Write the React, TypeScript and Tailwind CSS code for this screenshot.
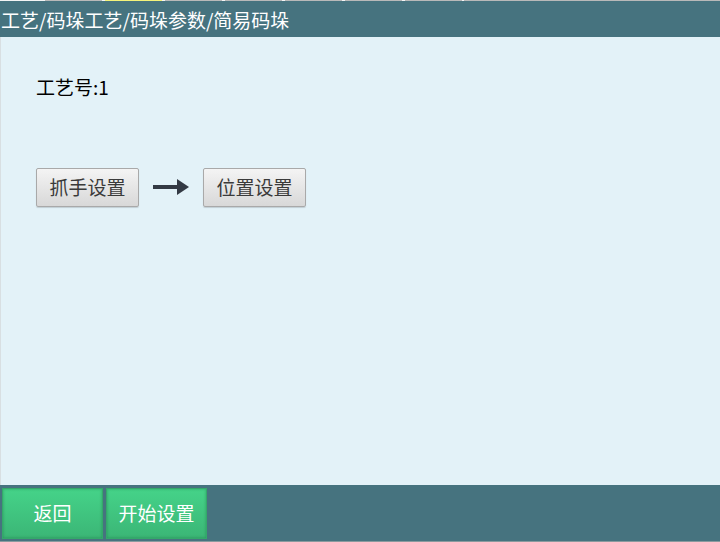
import React from "react";

const font = { fontFamily: '"Microsoft YaHei", "Noto Sans CJK SC", "Liberation Sans", sans-serif' };

function GrayBtn({ label }: { label: string }) {
  return (
    <button
      className="w-[103px] h-[39px] flex items-center justify-center rounded-[2px] border border-[#a9a9a9] bg-gradient-to-b from-[#f4f4f4] to-[#d8d8d8] text-[19px] text-[#3a3a3a] shadow-[0_1px_1px_rgba(0,0,0,0.15)]"
      style={font}
    >
      {label}
    </button>
  );
}

function GreenBtn({ label }: { label: string }) {
  return (
    <button
      className="w-[101px] h-[51px] flex items-center justify-center border border-[#34a86a] bg-gradient-to-b from-[#45d389] to-[#3bb676] text-[19px] text-white shadow-[inset_0_0_3px_rgba(0,80,40,0.35)]"
      style={font}
    >
      {label}
    </button>
  );
}

export default function App() {
  const segs = [
    { w: 45, c: "#f4f4f4" },
    { w: 57, c: "#b9b9b9" },
    { w: 3, c: "#f4f4f4" },
    { w: 57, c: "#f5f27a" },
    { w: 3, c: "#f4f4f4" },
    { w: 57, c: "#b9b9b9" },
    { w: 3, c: "#f4f4f4" },
    { w: 57, c: "#b9b9b9" },
    { w: 3, c: "#f4f4f4" },
    { w: 57, c: "#b9b9b9" },
    { w: 3, c: "#f4f4f4" },
    { w: 57, c: "#b9b9b9" },
    { w: 3, c: "#f4f4f4" },
    { w: 57, c: "#b9b9b9" },
    { w: 2, c: "#f4f4f4" },
    { w: 256, c: "#b9b9b9" },
  ];
  return (
    <div className="w-[720px] h-[542px] flex flex-col bg-[#e3f2f8] overflow-hidden" style={font}>
      <div className="h-[1px] flex shrink-0">
        {segs.map((s, i) => (
          <div key={i} style={{ width: s.w, backgroundColor: s.c }} />
        ))}
      </div>
      <div className="h-[36px] shrink-0 bg-[#46737f] flex items-center pl-[1px] text-white text-[19px] leading-none">
        工艺/码垛工艺/码垛参数/简易码垛
      </div>
      <div className="flex-1 border-l border-[#d8dfe2] flex flex-col pl-[35px]">
        <div className="mt-[38px] text-[19px] leading-[24px] text-black">工艺号:1</div>
        <div className="mt-[69px] flex items-center">
          <GrayBtn label="抓手设置" />
          <svg width="64" height="39" viewBox="0 0 64 39">
            <rect x="14" y="17" width="26" height="4" fill="#333a44" />
            <polygon points="38,11 50,19 38,27" fill="#333a44" />
          </svg>
          <GrayBtn label="位置设置" />
        </div>
      </div>
      <div className="h-[57px] shrink-0 bg-[#46737f] flex items-start pt-[3px] pl-[2px] gap-[3px] border-b border-[#8a9a9e]">
        <GreenBtn label="返回" />
        <GreenBtn label="开始设置" />
      </div>
    </div>
  );
}
